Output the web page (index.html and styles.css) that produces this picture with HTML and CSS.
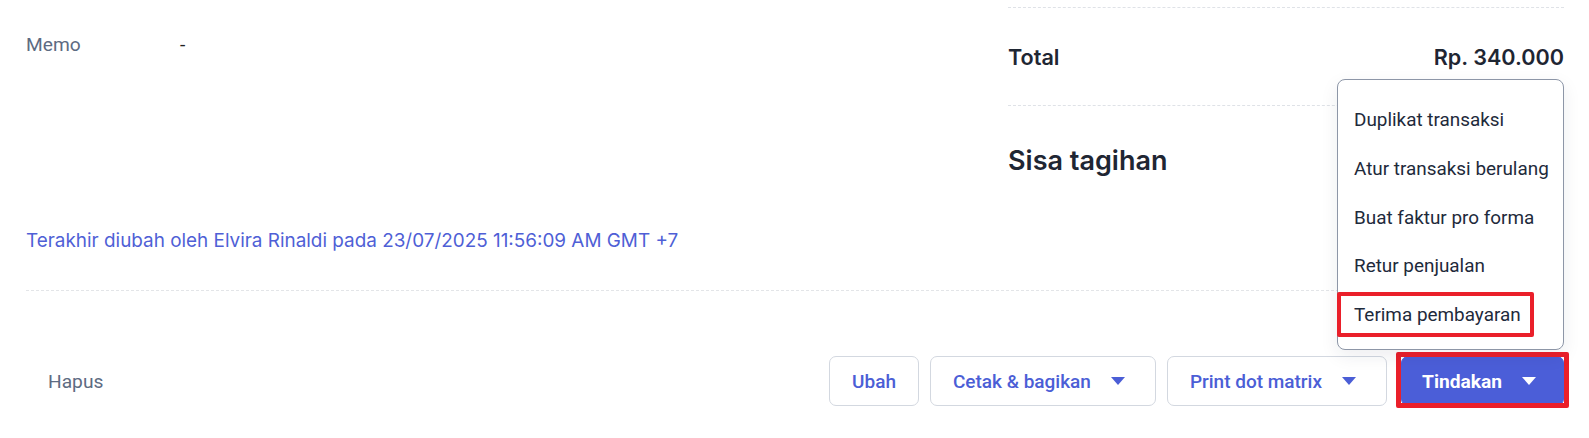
FILE: index.html
```
<!DOCTYPE html>
<html lang="id">
<head>
<meta charset="utf-8">
<title>Faktur</title>
<link rel="stylesheet" href="styles.css">
</head>
<body>
<div class="page">
  <div class="top">
    <div class="left">
      <div class="memo-row">
        <span class="memo-label">Memo</span>
        <span class="memo-value">-</span>
      </div>
      <div class="audit">Terakhir diubah oleh Elvira Rinaldi pada 23/07/2025 11:56:09 AM GMT +7</div>
    </div>
    <div class="right">
      <div class="sum-row total-row">
        <span>Total</span>
        <span>Rp. 340.000</span>
      </div>
      <div class="sum-row sisa-row">
        <span>Sisa tagihan</span>
      </div>
    </div>
  </div>
  <div class="footer">
    <button class="link-btn">Hapus</button>
    <div class="actions">
      <button class="btn">Ubah</button>
      <button class="btn">Cetak &amp; bagikan<span class="caret"></span></button>
      <button class="btn">Print dot matrix<span class="caret"></span></button>
      <div class="menu-wrap">
        <div class="menu">
          <div class="menu-item">Duplikat transaksi</div>
          <div class="menu-item">Atur transaksi berulang</div>
          <div class="menu-item">Buat faktur pro forma</div>
          <div class="menu-item">Retur penjualan</div>
          <div class="menu-item marked">Terima pembayaran</div>
        </div>
        <button class="btn primary">Tindakan<span class="caret white"></span></button>
      </div>
    </div>
  </div>
</div>
</body>
</html>
```
FILE: styles.css
```
*, *::before, *::after { box-sizing: border-box; }
html, body { margin: 0; padding: 0; background: #fff; }
body { font-family: Roboto, "Liberation Sans", Arial, sans-serif; }

.page {
  width: 1589px;
  height: 438px;
  padding: 0 25px 0 26px;
  position: relative;
  overflow: hidden;
}

.top {
  display: flex;
  align-items: flex-start;
}

.left {
  width: 982px;
  flex: none;
  display: flex;
  flex-direction: column;
}

.memo-row {
  display: flex;
  margin-top: 33px;
  height: 24px;
  line-height: 24px;
  font-size: 19.2px;
}
.memo-label { width: 154px; color: #5d6b82; }
.memo-value { color: #222; }

.audit {
  margin-top: 172px;
  font-family: Inter, "Noto Sans", sans-serif;
  font-size: 18.9px;
  line-height: 24px;
  color: #4f5fd6;
  white-space: nowrap;
}

.right {
  flex: 1;
  padding-top: 7px;
}

.sum-row {
  display: flex;
  justify-content: space-between;
  align-items: center;
  font-family: Inter, "Noto Sans", sans-serif;
  font-weight: 600;
  color: #1f2633;
  border-top: 1px dashed #dfe2e7;
}
.total-row {
  height: 98px;
  font-size: 21.6px;
  padding-top: 1px;
  padding-bottom: 1px;
}
.sisa-row {
  height: 110px;
  font-size: 27px;
  padding-bottom: 0;
}

.footer {
  margin-top: 37px;
  border-top: 1px dashed #e3e5e8;
  padding-top: 65px;
  display: flex;
  justify-content: space-between;
  align-items: center;
}

.link-btn {
  border: none;
  background: none;
  font-family: Roboto, "Liberation Sans", sans-serif;
  font-size: 19.2px;
  color: #5d6b82;
  padding: 0 22px;
  height: 50px;
}

.actions {
  display: flex;
  gap: 11px;
  align-items: center;
}

.btn {
  height: 50px;
  border: 1px solid #d3d8e0;
  border-radius: 7px;
  background: #fff;
  font-family: Roboto, "Liberation Sans", sans-serif;
  font-size: 19px;
  font-weight: 500;
  color: #4b5ed6;
  padding: 0 22px;
  display: flex;
  align-items: center;
  cursor: pointer;
}
.btn .caret {
  display: inline-block;
  width: 0;
  height: 0;
  margin-left: 20px;
  margin-right: 8px;
  border-left: 7.5px solid transparent;
  border-right: 7.5px solid transparent;
  border-top: 8px solid #4b5ed6;
}
.btn .caret.white { border-top-color: #fff; }

.menu-wrap {
  position: relative;
  margin-left: 3px;
}

.btn.primary {
  position: relative;
  width: 163px;
  padding: 0 0 0 20px;
  background: #4b5ed8;
  border-color: #4b5ed8;
  color: #fff;
  font-size: 19.2px;
  font-weight: 700;
}
.btn.primary .caret { margin-right: 0; }
.btn.primary::after {
  content: "";
  position: absolute;
  top: -5px;
  bottom: -3px;
  left: -6px;
  right: -6px;
  border: 5px solid #ea1f2a;
  border-radius: 2px;
}

.menu {
  position: absolute;
  right: 0;
  bottom: calc(100% + 6px);
  width: 227px;
  height: 271px;
  background: #fff;
  border: 1px solid #8d96a7;
  border-radius: 8px;
  box-shadow: 0 6px 18px rgba(30, 40, 60, 0.08);
  padding-top: 16px;
  z-index: 2;
}

.menu-item {
  height: 48.8px;
  line-height: 48.8px;
  padding-left: 16px;
  font-size: 18.9px;
  color: #1e2a3b;
  white-space: nowrap;
  position: relative;
}

.menu-item.marked::after {
  content: "";
  position: absolute;
  left: -1px;
  top: 1px;
  width: 197px;
  height: 45px;
  border: 4.5px solid #ea1f2a;
  border-radius: 2px;
}
```
